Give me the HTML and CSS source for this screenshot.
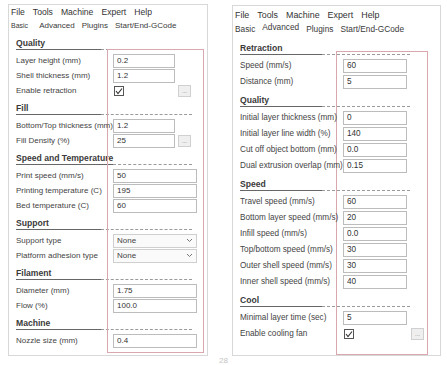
FILE: index.html
```html
<!DOCTYPE html>
<html lang="en">
<head>
  <meta charset="UTF-8">
  <meta name="viewport" content="width=device-width, initial-scale=1.0">
  <title>Cura - Print settings</title>
  <link rel="stylesheet" href="styles.css">
</head>
<body>
  <div class="panels">

    <!-- Basic tab -->
    <div class="panel basic">
      <div class="menu"><span>File</span><span>Tools</span><span>Machine</span><span>Expert</span><span>Help</span></div>
      <div class="tabs">
        <span class="tab small">Basic</span>
        <span class="tab">Advanced</span>
        <span class="tab">Plugins</span>
        <span class="tab">Start/End-GCode</span>
      </div>
      <div class="settings">
        <div class="heading"><span class="title">Quality</span><span class="rule"></span></div>
        <div class="row"><label>Layer height (mm)</label><input class="field" type="text" value="0.2"></div>
        <div class="row"><label>Shell thickness (mm)</label><input class="field" type="text" value="1.2"></div>
        <div class="row"><label>Enable retraction</label>
          <span class="ctl"><svg class="check" width="10" height="10" viewBox="0 0 10 10"><rect x="0.5" y="0.5" width="9" height="9" fill="#fff" stroke="#555"/><path d="M2 5 L4 7.5 L8 2.5" fill="none" stroke="#333" stroke-width="1.1"/></svg></span>
          <button class="more">...</button>
        </div>

        <div class="heading"><span class="title">Fill</span><span class="rule"></span></div>
        <div class="row"><label>Bottom/Top thickness (mm)</label><input class="field" type="text" value="1.2"></div>
        <div class="row"><label>Fill Density (%)</label><input class="field" type="text" value="25"><button class="more">...</button></div>

        <div class="heading"><span class="title">Speed and Temperature</span><span class="rule"></span></div>
        <div class="row"><label>Print speed (mm/s)</label><input class="field wide" type="text" value="50"></div>
        <div class="row"><label>Printing temperature (C)</label><input class="field wide" type="text" value="195"></div>
        <div class="row"><label>Bed temperature (C)</label><input class="field wide" type="text" value="60"></div>

        <div class="heading"><span class="title">Support</span><span class="rule"></span></div>
        <div class="row"><label>Support type</label>
          <div class="select">None<svg width="7" height="5" viewBox="0 0 7 5"><path d="M1 1 L3.5 3.5 L6 1" fill="none" stroke="#777"/></svg></div>
        </div>
        <div class="row"><label>Platform adhesion type</label>
          <div class="select">None<svg width="7" height="5" viewBox="0 0 7 5"><path d="M1 1 L3.5 3.5 L6 1" fill="none" stroke="#777"/></svg></div>
        </div>

        <div class="heading"><span class="title">Filament</span><span class="rule"></span></div>
        <div class="row"><label>Diameter (mm)</label><input class="field wide" type="text" value="1.75"></div>
        <div class="row"><label>Flow (%)</label><input class="field wide" type="text" value="100.0"></div>

        <div class="heading"><span class="title">Machine</span><span class="rule"></span></div>
        <div class="row"><label>Nozzle size (mm)</label><input class="field wide" type="text" value="0.4"></div>
      </div>
      <div class="frame"></div>
    </div>

    <!-- Advanced tab -->
    <div class="panel advanced">
      <div class="menu"><span>File</span><span>Tools</span><span>Machine</span><span>Expert</span><span>Help</span></div>
      <div class="tabs">
        <span class="tab">Basic</span>
        <span class="tab active">Advanced</span>
        <span class="tab">Plugins</span>
        <span class="tab">Start/End-GCode</span>
      </div>
      <div class="settings">
        <div class="heading"><span class="title">Retraction</span><span class="rule"></span></div>
        <div class="row"><label>Speed (mm/s)</label><input class="field" type="text" value="60"></div>
        <div class="row"><label>Distance (mm)</label><input class="field" type="text" value="5"></div>

        <div class="heading"><span class="title">Quality</span><span class="rule"></span></div>
        <div class="row"><label>Initial layer thickness (mm)</label><input class="field" type="text" value="0"></div>
        <div class="row"><label>Initial layer line width (%)</label><input class="field" type="text" value="140"></div>
        <div class="row"><label>Cut off object bottom (mm)</label><input class="field" type="text" value="0.0"></div>
        <div class="row"><label>Dual extrusion overlap (mm)</label><input class="field" type="text" value="0.15"></div>

        <div class="heading"><span class="title">Speed</span><span class="rule"></span></div>
        <div class="row"><label>Travel speed (mm/s)</label><input class="field" type="text" value="60"></div>
        <div class="row"><label>Bottom layer speed (mm/s)</label><input class="field" type="text" value="20"></div>
        <div class="row"><label>Infill speed (mm/s)</label><input class="field" type="text" value="0.0"></div>
        <div class="row"><label>Top/bottom speed (mm/s)</label><input class="field" type="text" value="30"></div>
        <div class="row"><label>Outer shell speed (mm/s)</label><input class="field" type="text" value="30"></div>
        <div class="row"><label>Inner shell speed (mm/s)</label><input class="field" type="text" value="40"></div>

        <div class="heading"><span class="title">Cool</span><span class="rule"></span></div>
        <div class="row"><label>Minimal layer time (sec)</label><input class="field" type="text" value="5"></div>
        <div class="row"><label>Enable cooling fan</label>
          <span class="ctl"><svg class="check" width="10" height="10" viewBox="0 0 10 10"><rect x="0.5" y="0.5" width="9" height="9" fill="#fff" stroke="#555"/><path d="M2 5 L4 7.5 L8 2.5" fill="none" stroke="#333" stroke-width="1.1"/></svg></span>
          <button class="more">...</button>
        </div>
      </div>
      <div class="frame"></div>
    </div>

  </div>
  <div class="pagenum">28</div>
</body>
</html>
```

FILE: styles.css
```css
* {
  box-sizing: border-box;
}
body {
  margin: 0;
  width: 447px;
  height: 365px;
  overflow: hidden;
  background: #fff;
  font-family: "Liberation Sans", Arial, sans-serif;
  color: #444;
}
.panels {
  display: flex;
  align-items: flex-start;
  gap: 24px;
  padding: 4px 0 0 8px;
}
.panel {
  position: relative;
  border: 1px solid #d8d8d8;
  background: #fff;
}
.basic {
  width: 200px;
  height: 352px;
}
.advanced {
  width: 209px;
  height: 351px;
  margin-top: 1px;
}

/* menu bar + tabs */
.menu {
  display: flex;
  gap: 8px;
  height: 14px;
  padding: 1px 0 0 2px;
  font-size: 8.6px;
  line-height: 12px;
  color: #333;
}
.advanced .menu {
  height: 16px;
  padding-top: 3px;
  font-size: 8.9px;
}
.tabs {
  display: flex;
  gap: 7px;
  height: 14px;
  padding-left: 2px;
  font-size: 8px;
  line-height: 14px;
  color: #3a3a3a;
}
.advanced .tabs {
  font-size: 8.3px;
}
.tab.small {
  font-size: 7px;
  margin-right: 4px;
}
.tab.active {
  line-height: 11px;
}

/* settings list */
.settings {
  padding-left: 7px;
  font-size: 8px;
}
.advanced .settings {
  padding-top: 1.5px;
  font-size: 8.2px;
}
.heading {
  display: flex;
  align-items: flex-end;
  width: 176px;
  height: 17px;
  margin-bottom: 3px;
}
.advanced .heading {
  width: 170px;
}
.heading .title {
  min-width: 85px;
  line-height: 11px;
  font-weight: bold;
  font-size: 8.6px;
  color: #3a3a3a;
  border-bottom: 1px solid #666;
}
.advanced .heading .title {
  min-width: 82px;
}
.heading .rule {
  flex: 1;
  border-bottom: 1px dashed #9a9a9a;
}
.row {
  display: flex;
  align-items: center;
  height: 15px;
}
.advanced .row {
  height: 16px;
}
.row label {
  width: 97px;
  flex: none;
  white-space: nowrap;
  z-index: 1;
}
.advanced .row label {
  width: 103px;
}
.field {
  width: 62px;
  height: 14px;
  padding: 0 0 0 3px;
  border: 1px solid #bcbcbc;
  background: transparent;
  font-family: inherit;
  font-size: 8px;
  color: #333;
  outline: none;
}
.advanced .field {
  width: 64px;
  font-size: 8.2px;
}
.field.wide {
  width: 84px;
}
.ctl {
  display: flex;
  width: 62px;
  padding-left: 1px;
}
.advanced .ctl {
  width: 64px;
}
.more {
  width: 13px;
  height: 12px;
  margin-left: 3px;
  padding: 0;
  border: 1px solid #d0d0d0;
  background: #efefef;
  font-family: inherit;
  font-size: 6px;
  line-height: 8px;
  color: #777;
}
.advanced .more {
  margin-left: 4px;
}
.select {
  display: flex;
  align-items: center;
  justify-content: space-between;
  width: 84px;
  height: 14px;
  padding: 0 3px 0 3px;
  border: 1px solid #cfcfcf;
  background: #fafafa;
  color: #444;
}

/* red annotation box drawn over the value column */
.frame {
  position: absolute;
  left: 98px;
  top: 44px;
  width: 97px;
  height: 304px;
  border: 1px solid #d9a7ae;
  pointer-events: none;
}
.advanced .frame {
  left: 103px;
  top: 45px;
  width: 92px;
  height: 304px;
}
.pagenum {
  text-align: center;
  font-size: 8px;
  line-height: 9px;
  color: #c4c4c4;
}
```
